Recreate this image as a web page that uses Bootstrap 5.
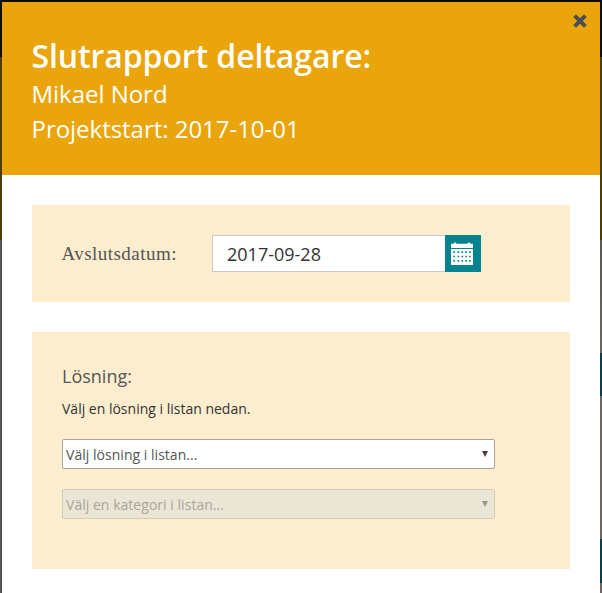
<!DOCTYPE html>
<html lang="sv">
<head>
<meta charset="utf-8">
<title>Slutrapport deltagare</title>
<link href="https://cdn.jsdelivr.net/npm/bootstrap@5.3.0/dist/css/bootstrap.min.css" rel="stylesheet">
<style>
html, body { height: 100%; }
body {
  margin: 0; overflow: hidden;
  background-color: #0f0d06;
  background-image:
    linear-gradient(#0d0b05 0, #0d0b05 57px, #4f3b0a 57px, #4f3b0a 240px, #55544f 240px, #55544f 100%),
    linear-gradient(#0d0b05 0, #0d0b05 57px, #4f3b0a 57px, #4f3b0a 240px, #5a5853 240px, #6b6660 353px, #0d3f4a 353px, #0d3f4a 396px, #6b6660 396px, #6b6660 539px, #0d3f4a 539px, #0d3f4a 583px, #6b6660 583px);
  background-size: 50% 100%, 50% 100%;
  background-position: left top, right top;
  background-repeat: no-repeat;
  font-family: "Open Sans", sans-serif;
  color: #333;
}
.dlg-shell { margin: 2px 2px 0; background: #fff; height: 591px; overflow: hidden; position: relative; }
.dlg-head { background: #e9a50b; color: #fff; height: 173px; padding: 36px 30px 0 29.5px; }
.dlg-title { font-size: 32px; font-weight: 600; line-height: 36px; margin: 0 0 2px; letter-spacing: -.1px; }
.dlg-sub { font-size: 24px; line-height: 35px; letter-spacing: -.03px; }
.dlg-close { position: absolute; top: 11px; right: 12px; width: 16px; height: 16px; padding: 0; border: 0; background: none; line-height: 0; }
.dlg-body { padding: 30px 30px 0; }
.sand-panel { background: #fcedcf; padding: 30px; }
.sand-panel + .sand-panel { margin-top: 30px; }
.date-panel { height: 97px; }
.date-label { width: 150px; padding-right: 0; margin-right: 0; font-family: "Liberation Serif", serif; font-size: 19px; color: #555; line-height: 38px; letter-spacing: .47px; text-indent: -.6px; }
.date-input { width: 233px; height: 37px; border: 1px solid #c9c9c9; border-right: 0; border-radius: 0; font-size: 18px; padding: 0 14px; color: #333; background: #fff; }
.date-btn { width: 36px; height: 37px; background: #06838f; border: 0; padding: 0 2px 0 0; display: flex; align-items: center; justify-content: center; }
.sol-panel { height: 237px; padding-top: 29px; }
.sol-title { font-size: 18px; font-weight: 400; color: #555; line-height: 30px; margin: 0 0 8px; }
.sol-help { font-size: 14px; line-height: 20px; margin: 0 0 20px; color: #333; }
.sol-select { display: block; width: 433px; height: 30px; border: 1px solid #a8a297; border-radius: 2px; background: #fff; font-size: 14px; color: #555; padding: 0 3px; position: relative; line-height: 29px; letter-spacing: .03px; }
.sol-select::after { content: ""; position: absolute; right: 6px; top: 11px; border: 3.5px solid transparent; border-top: 6px solid #444; border-bottom: 0; }
.sol-select + .sol-select { margin-top: 20px; }
.sol-select.is-off { background: #ebe5d6; border-color: #d3ccbc; color: #a9a598; }
.sol-select.is-off::after { border-top-color: #9b968a; }
</style>
</head>
<body>
<div class="dlg-shell">
  <header class="dlg-head">
    <h1 class="dlg-title">Slutrapport deltagare:</h1>
    <div class="dlg-sub">Mikael Nord</div>
    <div class="dlg-sub">Projektstart: 2017-10-01</div>
  </header>
  <button class="dlg-close" type="button" aria-label="Stäng">
    <svg width="16" height="16" viewBox="0 0 16 16"><path d="M1.2 4 4 1.2 8 5.2 12 1.2 14.8 4 10.8 8 14.8 12 12 14.8 8 10.8 4 14.8 1.2 12 5.2 8Z" fill="#4a4f55"/></svg>
  </button>
  <div class="dlg-body">
    <section class="sand-panel date-panel d-flex align-items-start">
      <label class="date-label" for="d1">Avslutsdatum:</label>
      <input id="d1" class="date-input" type="text" value="2017-09-28">
      <button class="date-btn" type="button" aria-label="Kalender">
        <svg width="22" height="23" viewBox="1 2 20 21"><path d="M1 3.5H3.5C3.5 2 5.5 2 6 3.5H16C16.5 2 18.5 2 18.5 3.5H21V7.5H1Z" fill="#fff"/><path fill-rule="evenodd" fill="#fff" d="M1 8.5H21V23H1ZM3 10.5V12H4.5V10.5ZM7 10.5V12H8.5V10.5ZM10.5 10.5V12H12V10.5ZM14 10.5V12H15.5V10.5ZM17.5 10.5V12H19V10.5ZM3 14.5V16H4.5V14.5ZM7 14.5V16H8.5V14.5ZM10.5 14.5V16H12V14.5ZM14 14.5V16H15.5V14.5ZM17.5 14.5V16H19V14.5ZM3 18.5V20H4.5V18.5ZM7 18.5V20H8.5V18.5ZM10.5 18.5V20H12V18.5ZM14 18.5V20H15.5V18.5ZM17.5 18.5V20H19V18.5Z"/></svg>
      </button>
    </section>
    <section class="sand-panel sol-panel">
      <h2 class="sol-title">Lösning:</h2>
      <p class="sol-help">Välj en lösning i listan nedan.</p>
      <div class="sol-select">Välj lösning i listan...</div>
      <div class="sol-select is-off">Välj en kategori i listan...</div>
    </section>
  </div>
</div>
<script src="https://cdn.jsdelivr.net/npm/bootstrap@5.3.0/dist/js/bootstrap.bundle.min.js"></script>
</body>
</html>
